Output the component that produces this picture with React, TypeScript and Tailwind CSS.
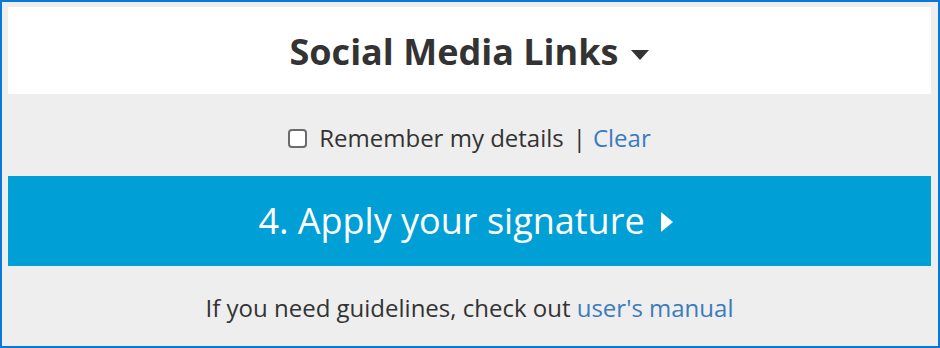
import React from 'react';

const App = () => {
  return (
    <div
      className="w-[940px] h-[348px] border-2 border-[#0a78d6] bg-[#eeeeee] px-[6px] pt-[5px] pr-[7px] text-[#333333]"
      style={{ fontFamily: '"Open Sans", "Liberation Sans", sans-serif' }}
    >
      {/* Section header */}
      <div className="h-[87px] bg-white flex items-center justify-center pt-[3px]">
        <h2 className="text-[36px] font-bold flex items-center gap-[13px]">
          Social Media Links
          <svg width="18" height="10" viewBox="0 0 18 10" className="mt-[6px]">
            <path d="M0 0 L18 0 L9 10 Z" fill="#333333" />
          </svg>
        </h2>
      </div>

      {/* Remember row */}
      <div className="h-[82px] flex items-center justify-center text-[24px] pt-[6px]">
        <input
          type="checkbox"
          className="appearance-none w-[19px] h-[19px] border-2 border-[#6b6b6b] rounded-[4px] bg-white mr-[12px]"
        />
        <span>Remember my details</span>
        <span className="ml-[9px] mr-[7px]">|</span>
        <a href="#" className="text-[#3b7bbd]">Clear</a>
      </div>

      {/* Apply button */}
      <button className="w-full h-[90px] bg-[#009fd6] text-white text-[36px] flex items-center justify-center gap-[16px] pr-[8px]">
        4. Apply your signature
        <svg width="12" height="20" viewBox="0 0 12 20" className="mt-[2px]">
          <path d="M0 0 L12 10 L0 20 Z" fill="#ffffff" />
        </svg>
      </button>

      {/* Footer */}
      <div className="h-[80px] flex items-center justify-center text-[24px] pt-[4px]">
        <p>
          If you need guidelines, check out{' '}
          <a href="#" className="text-[#3b7bbd]">user's manual</a>
        </p>
      </div>
    </div>
  );
};

export default App;
